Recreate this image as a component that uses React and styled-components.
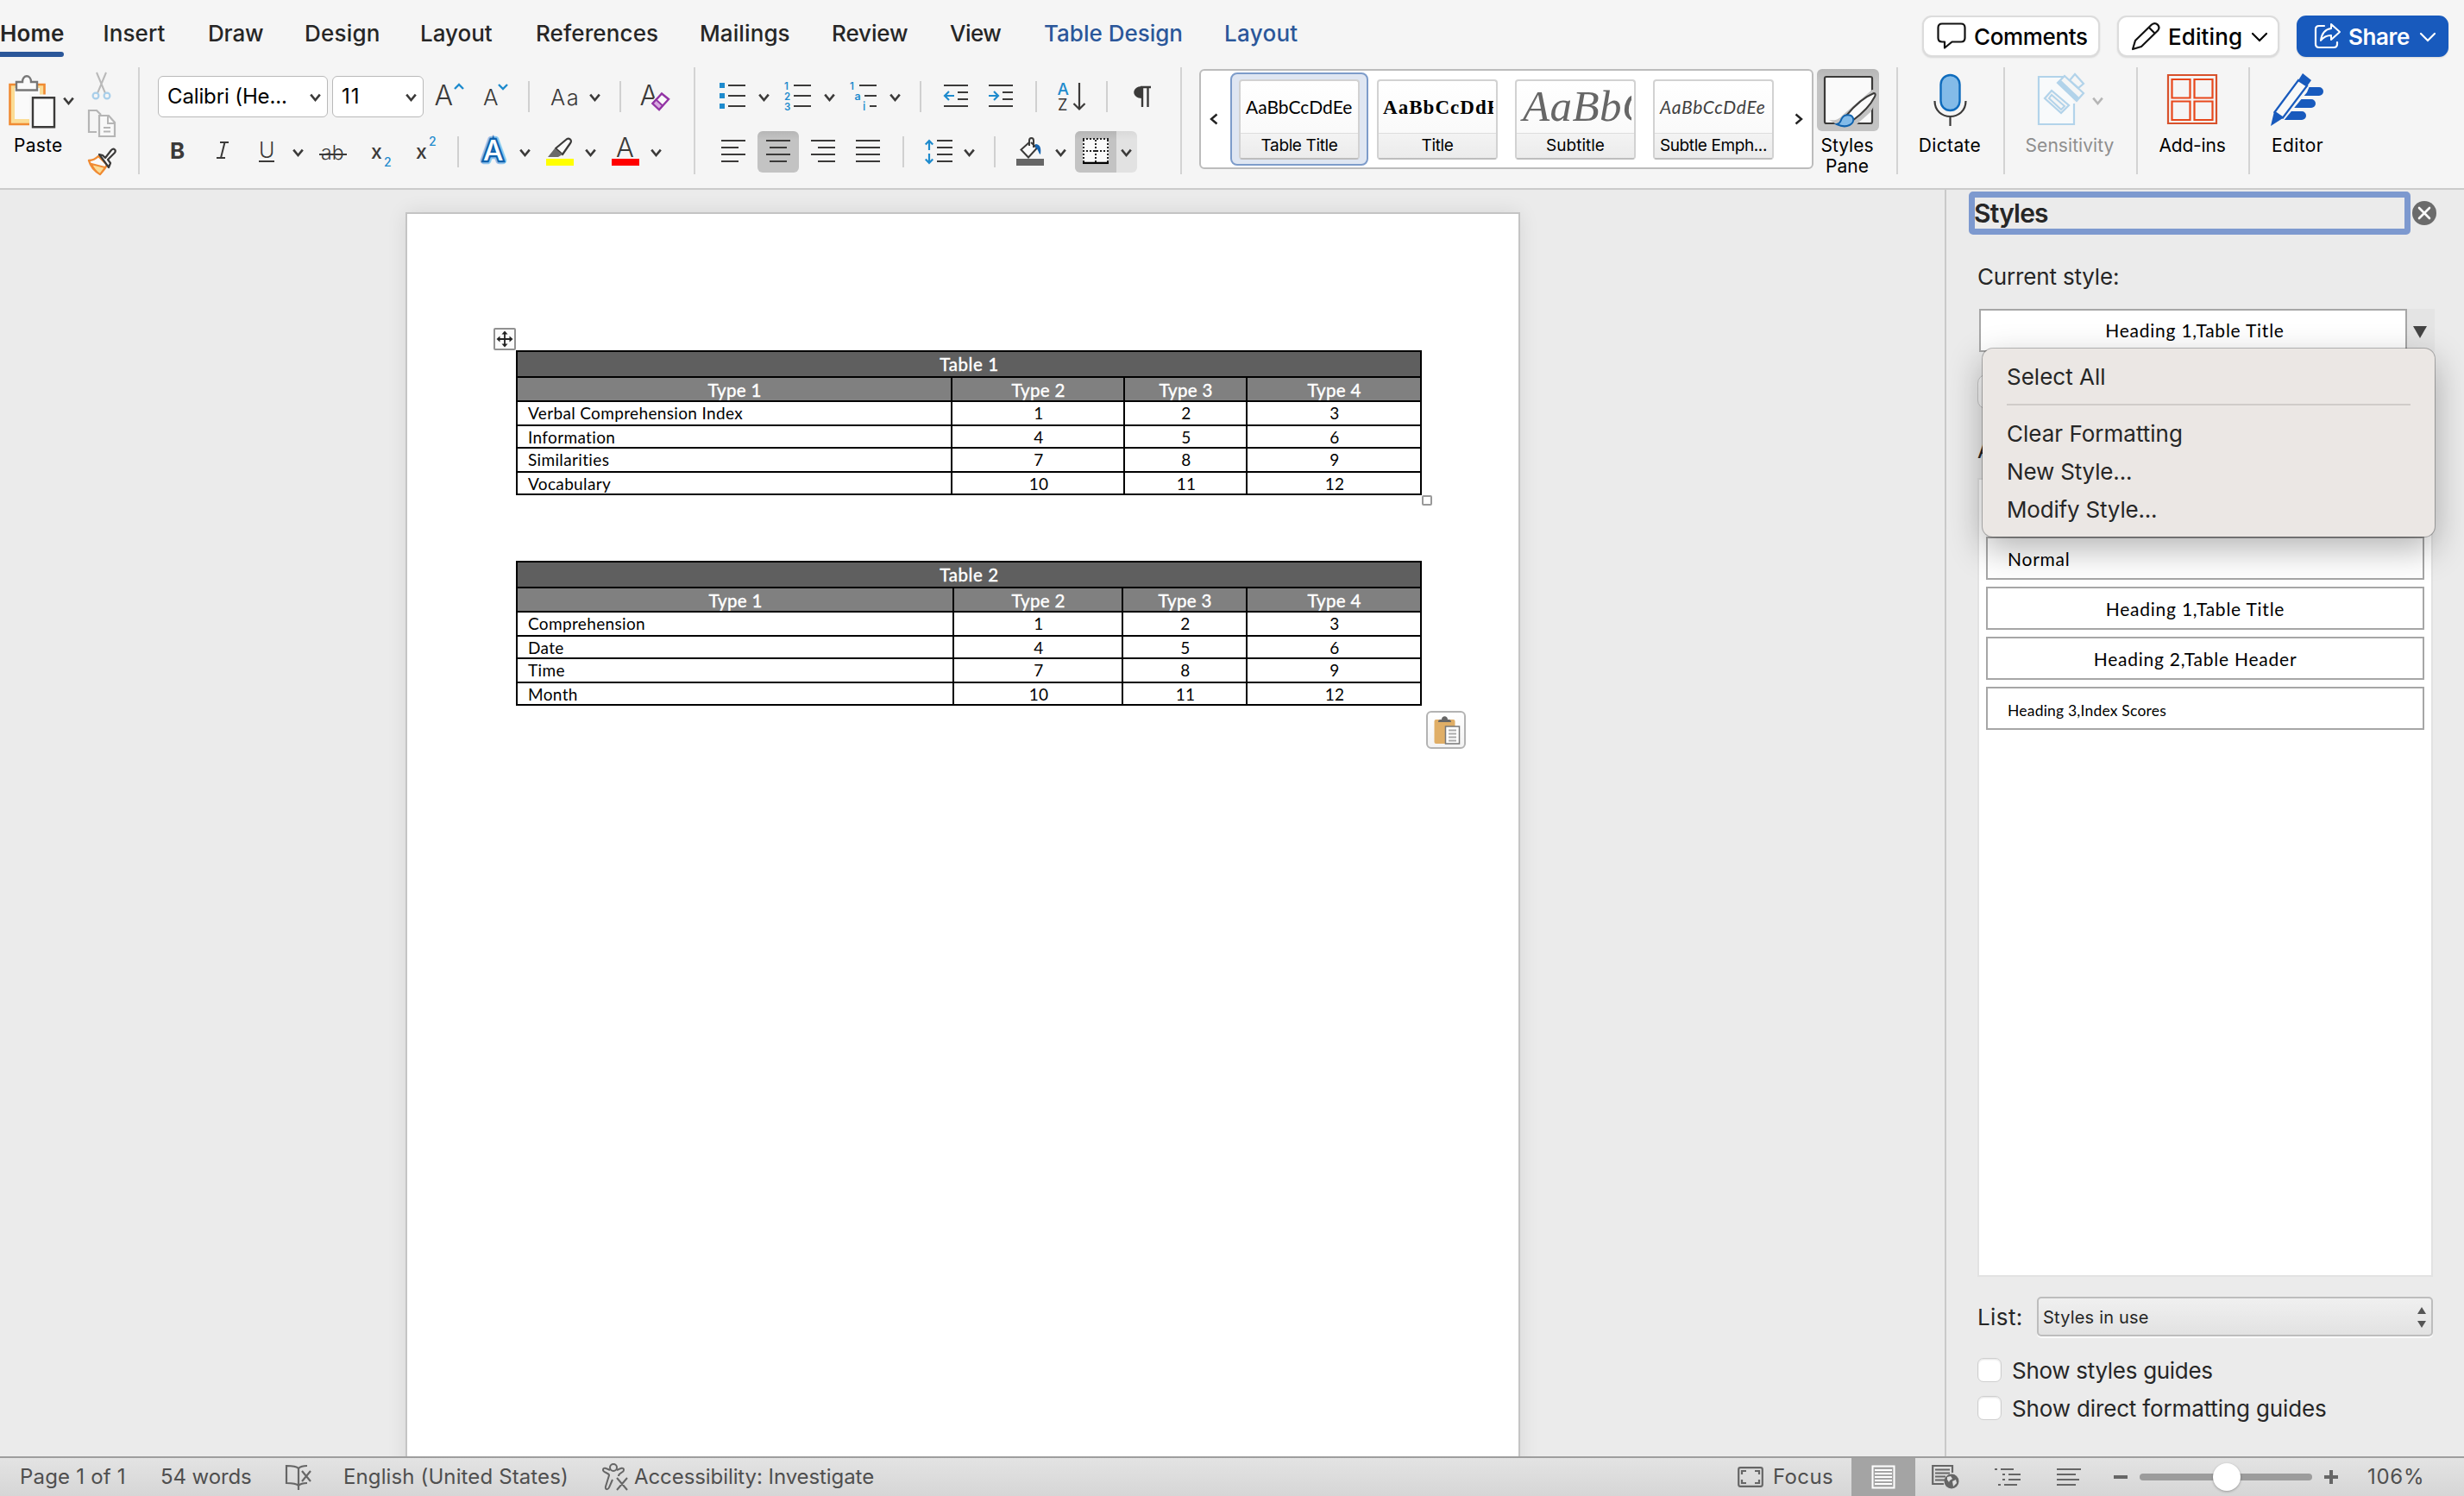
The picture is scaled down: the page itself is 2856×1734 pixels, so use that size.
import React from 'react';
import styled, { createGlobalStyle, css } from 'styled-components';

const ink = '#3b3a39';
const blue = '#1e8bcd';
const gray = '#666';
const ui = '"Inter", "Liberation Sans", sans-serif';
const calibri = '"Lato", "Open Sans", sans-serif';

const GlobalStyle = createGlobalStyle`
  * {
    box-sizing: border-box;
  }
  body {
    margin: 0;
    background: #ebebeb;
    font-family: ${ui};
    color: #262626;
    overflow: hidden;
  }
  svg {
    display: block;
    flex: none;
    overflow: visible;
  }
`;

const Window = styled.div`
  width: 2856px;
  height: 1734px;
  display: flex;
  flex-direction: column;
  overflow: hidden;
`;

/* ---------- tab bar ---------- */

const TabBar = styled.header`
  height: 72px;
  flex: none;
  display: flex;
  justify-content: space-between;
  background: #f5f5f5;
`;

const Tabs = styled.nav`
  display: flex;
  padding-top: 18px;
`;

const Tab = styled.a`
  width: ${props => props.$width}px;
  font-size: 26px;
  line-height: 42px;
  font-weight: ${props => props.$active ? 600 : 500};
  color: ${props => props.$contextual ? '#2b579a' : '#262626'};
  letter-spacing: ${props => props.$spacing || 0}px;
  white-space: nowrap;

  &::after {
    content: '';
    display: ${props => props.$active ? 'block' : 'none'};
    width: 74px;
    height: 6px;
    border-radius: 0 3px 3px 0;
    background: #2b579a;
  }
`;

const TopActions = styled.div`
  display: flex;
  gap: 20px;
  padding: 18px 18px 0 0;
`;

const ActionButton = styled.button`
  height: 48px;
  width: ${props => props.$width}px;
  padding: 0 0 0 ${props => props.$pad}px;
  display: flex;
  align-items: center;
  border: 2px solid ${props => props.$primary ? '#185abd' : '#dcdcdc'};
  border-radius: 11px;
  background: ${props => props.$primary ? '#185abd' : '#fff'};
  color: ${props => props.$primary ? '#fff' : '#000'};
  box-shadow: 0 1px 2px rgba(0, 0, 0, 0.12);
  font-family: ${ui};
  font-size: 26px;
  line-height: 44px;
  font-weight: ${props => props.$primary ? 600 : 500};
  letter-spacing: ${props => props.$spacing}px;
`;

const ActionText = styled.span`
  width: ${props => props.$width}px;
  margin-left: ${props => props.$gap}px;
  padding-top: 1px;
  text-align: left;
`;

/* ---------- ribbon ---------- */

const Ribbon = styled.section`
  height: 148px;
  flex: none;
  display: flex;
  background: #f5f5f5;
  border-bottom: 2px solid #cbcbcb;
`;

const GroupLine = styled.div`
  width: 2px;
  height: 124px;
  flex: none;
  margin-top: 6px;
  background: #d3d3d3;
`;

const Group = styled.div`
  width: ${props => props.$width}px;
  flex: none;
  padding-top: 8px;
`;

const Clipboard = styled(Group)`
  display: flex;
`;

const ToolRow = styled.div`
  height: 64px;
  display: flex;
  align-items: center;
`;

const Svg = styled.svg`
  margin-left: ${props => props.$ml || 0}px;
  margin-top: ${props => props.$mt || 0}px;
`;

const RowLine = styled.div`
  width: 2px;
  height: 36px;
  margin-left: ${props => props.$ml}px;
  background: #d0d0d0;
`;

const Combo = styled.div`
  width: ${props => props.$width}px;
  height: 48px;
  margin-left: ${props => props.$ml}px;
  padding: 0 7px 0 10px;
  display: flex;
  align-items: center;
  justify-content: space-between;
  background: #fff;
  border: 1.5px solid #b9b9b9;
  border-radius: 6px;
  color: #000;
  font-size: 24px;
  line-height: 44px;
  letter-spacing: ${props => props.$spacing}px;
`;

const PasteColumn = styled.div`
  width: 92px;
  padding-left: 10px;
`;

const PasteTop = styled.div`
  height: 72px;
  margin-bottom: 5px;
  display: flex;
  align-items: center;
`;

const SmallColumn = styled.div`
  display: flex;
  flex-direction: column;
  gap: 10px;
  padding: 3px 0 0 8px;
`;

const Caption = styled.div`
  font-size: 21px;
  line-height: 24px;
  letter-spacing: ${props => props.$spacing || 0}px;
  text-align: ${props => props.$left ? 'left' : 'center'};
  padding-left: ${props => props.$left || 0}px;
  color: ${props => props.$muted ? '#8e8e8e' : '#000'};
`;

const pressed = css`
  background: linear-gradient(#b6b6b6, #c3c3c3 20%, #c3c3c3);
`;

const PressedButton = styled.div`
  width: 48px;
  height: 48px;
  margin-left: 14px;
  display: flex;
  align-items: center;
  justify-content: center;
  border-radius: 6px;
  ${pressed}
`;

const SplitButton = styled.div`
  width: 72px;
  height: 48px;
  margin-left: 10px;
  display: flex;
  align-items: center;
  border-radius: 6px;
  background: linear-gradient(#d9d9d9, #e2e2e2 20%);
  overflow: hidden;
`;

const SplitMain = styled.div`
  width: 48px;
  height: 48px;
  display: flex;
  align-items: center;
  justify-content: center;
  ${pressed}
`;

/* ---------- style gallery ---------- */

const Gallery = styled.div`
  width: 712px;
  height: 116px;
  flex: none;
  margin: 8px 0 0 20px;
  padding: 2px 11px 0 10px;
  display: flex;
  background: #fff;
  border: 2px solid #bcbcbc;
  border-radius: 6px;
`;

const GalleryItems = styled.div`
  display: flex;
  flex: 1;
  margin-left: 15px;
`;

const GallerySlot = styled.div`
  width: 160px;
  height: 108px;
  padding: 6px 8px;
  border: 2px solid ${props => props.$selected ? '#7d9cca' : 'transparent'};
  border-radius: 8px;
  background: ${props => props.$selected ? '#dfe6f2' : 'transparent'};
`;

const GalleryCard = styled.div`
  width: 140px;
  height: 93px;
  border: 2px solid #d2d2d2;
  border-bottom-color: #bdbdbd;
  border-radius: 4px;
  background: linear-gradient(#fff, #f7f7f7);
  overflow: hidden;
`;

const GallerySample = styled.div`
  height: 60px;
  margin: 0 3px 0 4px;
  padding-left: ${props => props.$pad || 0}px;
  overflow: hidden;
  white-space: nowrap;
  color: ${props => props.$color};
  font: ${props => props.$font};
  line-height: ${props => props.$line}px;
  letter-spacing: ${props => props.$spacing}px;
`;

const GalleryName = styled.div`
  height: 31px;
  border-top: 1px solid #dedede;
  background: linear-gradient(#f3f3f3, #ebebeb);
  color: #000;
  font-size: 19px;
  line-height: 27px;
  text-align: center;
  white-space: nowrap;
  letter-spacing: ${props => props.$spacing}px;
`;

const GalleryArrow = styled.div`
  width: 9px;
  padding-top: 47px;
`;

const BigTool = styled.div`
  width: ${props => props.$width}px;
  flex: none;
  padding: 8px 2px 0 0;
`;

const StylesPaneTool = styled.div`
  width: 72px;
  flex: none;
  margin: 0 20px 0 4px;
  padding-top: 8px;
`;

const PaneCaption = styled(Caption)`
  padding-right: 2px;
`;

const BigIcon = styled.div`
  height: 72px;
  margin-bottom: 5px;
  display: flex;
  align-items: center;
  justify-content: center;
  border-radius: 6px;
  ${props => props.$pressed && pressed}
`;

/* ---------- document ---------- */

const Workspace = styled.main`
  height: 1468px;
  flex: none;
  display: flex;
`;

const Canvas = styled.div`
  width: 2254px;
  padding: 26px 0 0 470px;
  overflow: hidden;
`;

const Page = styled.article`
  width: 1292px;
  height: 1500px;
  padding: 158px 0 0 126px;
  border: 2px solid #c4c4c4;
  background: #fff;
  box-shadow: 0 0 22px rgba(0, 0, 0, 0.09);
`;

const TableWrap = styled.div`
  position: relative;
  width: 1050px;
  margin-bottom: 76px;
`;

const Grid = styled.div`
  display: grid;
  grid-template-columns: ${props => props.$columns};
  grid-template-rows: 28px 26px 26px 24px 26px 24px;
  gap: 2px;
  padding: 2px;
  background: #000;
  font-family: ${calibri};
`;

const HeadCell = styled.div`
  padding-left: 1px;
  background: #808080;
  color: #fff;
  text-align: center;
  font-size: 20.5px;
  line-height: 28px;
  letter-spacing: 0.3px;
  -webkit-text-stroke: 0.4px #fff;
  overflow: hidden;
`;

const TitleCell = styled(HeadCell)`
  grid-column: 1 / -1;
  background: #5f5f5f;
  letter-spacing: 0.6px;
`;

const Cell = styled.div`
  padding-left: ${props => props.$label ? 12 : 2}px;
  background: #fff;
  color: #000;
  text-align: ${props => props.$label ? 'left' : 'center'};
  font-size: 19px;
  line-height: 25px;
  letter-spacing: 0.35px;
  overflow: hidden;
`;

const MoveHandle = styled.div`
  position: absolute;
  left: -26px;
  top: -26px;
  width: 26px;
  height: 26px;
  border: 2px solid #919191;
  border-radius: 2px;
  background: #fbfbfb;
`;

const ResizeHandle = styled.div`
  position: absolute;
  right: -12px;
  bottom: -12px;
  width: 12px;
  height: 12px;
  border: 2px solid #999;
  border-radius: 2px;
  background: #fff;
`;

const PasteOptions = styled.div`
  position: absolute;
  right: -51px;
  bottom: -50px;
  width: 46px;
  height: 44px;
  border: 2px solid #b3b3b3;
  border-radius: 6px;
  background: linear-gradient(#fff, #f3f3f3);
`;

/* ---------- styles pane ---------- */

const Pane = styled.aside`
  width: 602px;
  padding: 2px 30px 0 26px;
  border-left: 2px solid #c9c9c9;
  background: #ebebeb;
`;

const PaneHeader = styled.div`
  display: flex;
  align-items: center;
  gap: 2px;
`;

const PaneTitle = styled.h2`
  width: 512px;
  height: 50px;
  flex: none;
  margin: 0;
  border: 7px solid #7d99cf;
  border-radius: 5px;
  font-size: 30px;
  line-height: 36px;
  font-weight: 600;
  letter-spacing: -0.8px;
  text-indent: -1px;
`;

const PaneBody = styled.div`
  padding-left: 10px;
`;

const PaneLabel = styled.div`
  font-size: 26px;
  line-height: 32px;
  letter-spacing: ${props => props.$spacing || 0}px;
  color: #262626;
  white-space: nowrap;
`;

const CurrentLabel = styled(PaneLabel)`
  margin: 33px 0 21px;
`;

const CurrentStyle = styled.div`
  position: relative;
  width: 528px;
  height: 50px;
  margin-left: 2px;
  display: flex;
`;

const StyleBox = styled.div`
  width: 508px;
  height: 50px;
  padding: 0 ${props => props.$center ? 46 : 0}px 0 23px;
  border: 2px solid #a6a6a6;
  background: #fff;
  color: #000;
  font-family: ${calibri};
  font-size: ${props => props.$small ? 17.5 : 21}px;
  line-height: ${props => props.$small ? 51 : 48}px;
  letter-spacing: ${props => props.$small ? 0.2 : 0.76}px;
  text-align: ${props => props.$center ? 'center' : 'left'};
`;

const CurrentBox = styled(StyleBox)`
  width: 496px;
  padding: 0 3px 0 7px;
  line-height: 46px;
`;

const DropArrow = styled.div`
  width: 32px;
  padding: 20px 0 0 7px;
  background: #e4e4e4;
`;

const Menu = styled.div`
  position: absolute;
  z-index: 2;
  left: 4px;
  top: 46px;
  width: 524px;
  height: 218px;
  padding: 10px 28px 0;
  border-radius: 12px;
  background: #ebe7e4;
  box-shadow: 0 0 0 1px rgba(0, 0, 0, 0.26), 0 14px 40px rgba(0, 0, 0, 0.3);
`;

const MenuItem = styled.div`
  height: 44px;
  font-size: 26px;
  line-height: 46px;
  letter-spacing: ${props => props.$spacing || 0}px;
  color: #262626;
`;

const MenuRule = styled.div`
  height: 2px;
  margin: 10px 0;
  background: #d0ccc9;
`;

const NewStyleButton = styled.div`
  width: 200px;
  height: 40px;
  margin: 26px 0 32px;
  border: 1px solid #c6c6c6;
  border-radius: 10px;
  background: #f6f6f6;
`;

const StyleList = styled.div`
  width: 528px;
  height: 926px;
  margin: 16px 0 23px;
  padding: 8px;
  display: flex;
  flex-direction: column;
  gap: 8px;
  border: 2px solid #e2e2e2;
  background: #fff;
`;

const ListRow = styled.div`
  display: flex;
  align-items: center;
  margin-bottom: 25px;
`;

const ListLabel = styled(PaneLabel)`
  width: 69px;
  padding-top: 2px;
  letter-spacing: 0.4px;
`;

const ListSelect = styled.div`
  width: 459px;
  height: 46px;
  padding: 2px 6px 0 5px;
  display: flex;
  align-items: center;
  justify-content: space-between;
  border: 2px solid #bdbdbd;
  border-radius: 5px;
  background: linear-gradient(#f0f0f0, #e2e2e2);
  box-shadow: 0 2px 0 #fafafa;
  font-size: 20px;
  letter-spacing: 0.2px;
`;

const CheckRow = styled.label`
  height: 28px;
  margin-bottom: 16px;
  display: flex;
  align-items: center;
  gap: 12px;
`;

const CheckText = styled(PaneLabel)`
  padding-top: 2px;
`;

const CheckBox = styled.span`
  width: 28px;
  height: 28px;
  border: 1.5px solid #cfcfcf;
  border-radius: 7px;
  background: #fff;
  box-shadow: inset 0 1px 2px rgba(0, 0, 0, 0.12);
`;

/* ---------- status bar ---------- */

const StatusBar = styled.footer`
  height: 46px;
  flex: none;
  display: flex;
  align-items: center;
  border-top: 2px solid #9e9e9e;
  background: linear-gradient(#e3e3e3, #d6d6d6);
`;

const StatusText = styled.span`
  width: ${props => props.$width}px;
  flex: none;
  font-size: 24px;
  line-height: 44px;
  letter-spacing: ${props => props.$spacing || 0}px;
  color: #4f4f4f;
  white-space: nowrap;
  padding-left: ${props => props.$pad || 0}px;
`;

const StatusSpacer = styled.div`
  width: 998px;
  flex: none;
`;

const ViewButton = styled.div`
  width: 74px;
  height: 44px;
  flex: none;
  display: flex;
  justify-content: center;
  align-items: center;
  background: #a4a4a4;
`;

const Slider = styled.div`
  width: 200px;
  height: 8px;
  flex: none;
  margin-left: 14px;
  display: flex;
  align-items: center;
  justify-content: center;
  padding-left: 2px;
  border-radius: 4px;
  background: #9c9c9c;
`;

const Knob = styled.div`
  width: 32px;
  height: 32px;
  flex: none;
  border-radius: 50%;
  background: #fff;
  box-shadow: 0 1px 3px rgba(0, 0, 0, 0.3);
`;

/* ---------- icons ---------- */

const Glyph = ({ w, h = 40, ml, mt, children }) => (
  <Svg width={w} height={h} viewBox={`0 0 ${w} ${h}`} fill="none" $ml={ml} $mt={mt}>{children}</Svg>
);

const Chevron = ({ ml, color = ink }) => (
  <Glyph w={13} h={10} ml={ml} mt={2}><path d="M1.2 1.6 6.5 8 11.8 1.6" stroke={color} strokeWidth="2.6"/></Glyph>
);

const SlimChevron = ({ ml }) => (
  <Glyph w={20} h={12} ml={ml} mt={2}><path d="M2 2 10 10 18 2" stroke="currentColor" strokeWidth="2.2" strokeLinecap="round"/></Glyph>
);

const Letters = ({ x, y, size, weight = 300, fill = ink, children, ...rest }) => (
  <text x={x} y={y} fontSize={size} fontWeight={weight} fill={fill} fontFamily="Inter, sans-serif" {...rest}>{children}</text>
);

const PasteIcon = () => (
  <Glyph w={56} h={62} mt={4}>
    <path d="M1.5 11h40v46h-40z" fill="#fbdc95" stroke="#f08b33" strokeWidth="2.6"/>
    <path d="M7 15h29v36H7z" fill="#fafafa"/>
    <path d="M9 8h7c0-9 10-9 10 0h7v9.500H9z" fill="#fafafa" stroke="#777" strokeWidth="2.4"/>
    <path d="M24 22.500h32v39H24z" fill="#f5f5f5"/>
    <path d="M28 26.200h25v34H28z" fill="#fafafa" stroke={ink} strokeWidth="2.4"/>
  </Glyph>
);

const CutIcon = () => (
  <Glyph w={34} h={33}>
    <path d="M12 1 22 25M23 1 13 25" stroke="#b9b9b9" strokeWidth="2"/>
    <circle cx="11" cy="28" r="3.4" stroke="#a9cfea" strokeWidth="2.2"/>
    <circle cx="24" cy="28" r="3.4" stroke="#a9cfea" strokeWidth="2.2"/>
  </Glyph>
);

const CopyIcon = () => (
  <Glyph w={34} h={34}>
    <path d="M12 27H3V2h9l5 5" stroke="#b5b5b5" strokeWidth="2.2"/>
    <path d="M15 8h11l7 8v16H15z" fill="#f8f8f8" stroke="#b5b5b5" strokeWidth="2.2"/>
    <path d="M25 8v9h8M20 22h8M20 26.500h8" stroke="#b5b5b5" strokeWidth="2"/>
  </Glyph>
);

const BrushIcon = () => (
  <Glyph w={34} h={34}>
    <path d="M3 16c5 0 8-2 11-5l10 10c-2 4-4 7-8 11C9 28 5 23 3 16z" fill="#fafafa" stroke="#f08b33" strokeWidth="2.4" strokeLinejoin="round"/>
    <path d="M6 20l16 4-6 8c-5-3-8-7-10-12z" fill="#fbdc95" stroke="#f08b33" strokeWidth="2"/>
    <path d="M15 9l4 1 3 3 7-9c3-3 6 0 4 3l-8 8 3 4-2 5z" fill="#f8f8f8" stroke={ink} strokeWidth="2.2" strokeLinejoin="round"/>
  </Glyph>
);

const GrowFont = () => (
  <Glyph w={34} ml={12}>
    <Letters x={0.5} y={30} size={32}>A</Letters>
    <path d="M24 11l5-5 5 5" stroke={blue} strokeWidth="2.4"/>
  </Glyph>
);

const ShrinkFont = () => (
  <Glyph w={32} ml={22}>
    <Letters x={1} y={30} size={26}>A</Letters>
    <path d="M19 6l5 5 5-5" stroke={blue} strokeWidth="2.4"/>
  </Glyph>
);

const ClearFormat = () => (
  <Glyph w={38} ml={21}>
    <Letters x={0.5} y={30} size={32}>A</Letters>
    <path d="M26 16l9 8-10 11-9-8z" fill="#f5f5f5" stroke="#f5f5f5" strokeWidth="5"/>
    <path d="M26 16.500l8 6.500-11 12-7.500-7z" fill="#fafafa" stroke="#9334a5" strokeWidth="2.4"/>
    <path d="M19.500 23.500l7.500 7-4 4.500-7.500-7z" fill="#d8a9e0" stroke="#9334a5" strokeWidth="2"/>
  </Glyph>
);

const Script = ({ up, ml }) => (
  <Glyph w={28} ml={ml}>
    <Letters x={0} y={28} size={23} weight={500}>x</Letters>
    <Letters x={15} y={up ? 13 : 37} size={14} weight={500} fill={blue}>2</Letters>
  </Glyph>
);

const TextEffects = () => (
  <Glyph w={36} ml={22}>
    <Letters x={6} y={30} size={33} weight={500} stroke="#8fc3ec" strokeWidth="8.5" strokeLinejoin="round">A</Letters>
    <Letters x={6} y={30} size={33} weight={500} stroke="#0f62ad" strokeWidth="4.6">A</Letters>
    <Letters x={6} y={30} size={33} weight={500} fill="#fff">A</Letters>
  </Glyph>
);

const Highlighter = () => (
  <Glyph w={32} ml={18}>
    <path d="M0 28h32v8H0z" fill="#ff0"/>
    <path d="M11 16 23 6c3-3 8 0 5 4l-9 13z" fill="#fafafa" stroke={ink} strokeWidth="2.2" strokeLinejoin="round"/>
    <path d="M10 16l9 7-5 3H2z" fill="#6a6a6a"/>
  </Glyph>
);

const FontColor = () => (
  <Glyph w={32} ml={18}>
    <Letters x={5} y={26} size={31}>A</Letters>
    <path d="M0 28h32v8H0z" fill="red"/>
  </Glyph>
);

const Bullets = () => (
  <Glyph w={30} ml={28}>
    <path d="M0 4h6v6H0zM0 16h6v6H0zM0 28h6v6H0z" fill={blue}/>
    <path d="M10 7h20M10 19h20M10 31h20" stroke={ink} strokeWidth="2"/>
  </Glyph>
);

const Numbering = () => (
  <Glyph w={32} ml={16}>
    <Letters x={1} y={12} size={11.5} weight={600} fill={blue}>1</Letters>
    <Letters x={1} y={24} size={11.5} weight={600} fill={blue}>2</Letters>
    <Letters x={1} y={36} size={11.5} weight={600} fill={blue}>3</Letters>
    <path d="M12 7h20M12 19h20M12 31h20" stroke={ink} strokeWidth="2"/>
  </Glyph>
);

const Multilevel = () => (
  <Glyph w={32} ml={16}>
    <Letters x={1} y={12} size={11.5} weight={600} fill={blue}>1</Letters>
    <Letters x={6.5} y={24} size={12.5} weight={600} fill={blue}>a</Letters>
    <Letters x={16} y={36} size={13} weight={500} fill={blue}>i</Letters>
    <path d="M12 7h20M18 19h14M24 31h8" stroke={ink} strokeWidth="2"/>
  </Glyph>
);

const Indent = ({ out, ml }) => (
  <Glyph w={28} ml={ml}>
    <path d="M0 7h28M16 15h12M16 23h12M0 31h28" stroke={ink} strokeWidth="2"/>
    <path d={out ? 'M12 19H1.500M6 14l-5 5 5 5' : 'M0 19h10.500M6 14l5 5-5 5'} stroke={blue} strokeWidth="2.2"/>
  </Glyph>
);

const SortIcon = () => (
  <Glyph w={34} ml={24}>
    <Letters x={-0.5} y={18} size={19} weight={500} fill={blue}>A</Letters>
    <Letters x={0} y={36} size={18} weight={400}>Z</Letters>
    <path d="M25 4v30M18.500 28l6.500 6.500 6.500-6.500" stroke={ink} strokeWidth="2.2"/>
  </Glyph>
);

const Pilcrow = () => (
  <Glyph w={24} ml={28}>
    <path d="M22 9H10M12 9v23M18.500 9v23" stroke={ink} strokeWidth="2.4"/>
    <path d="M12 8c-13 0-13 14 0 14z" fill={ink}/>
  </Glyph>
);

const alignShapes = {
  left: 'M0 7h28M0 15h20M0 23h28M0 31h20',
  center: 'M0 7h28M4 15h20M0 23h28M4 31h20',
  right: 'M0 7h28M8 15h20M0 23h28M8 31h20',
  justify: 'M0 7h28M0 15h28M0 23h28M0 31h28',
};

const Align = ({ kind, ml }) => (
  <Glyph w={28} ml={ml}><path d={alignShapes[kind]} stroke={ink} strokeWidth="2"/></Glyph>
);

const LineSpacing = () => (
  <Glyph w={32} ml={24}>
    <path d="M14 7h18M14 15h18M14 23h18M14 31h18" stroke={ink} strokeWidth="2"/>
    <path d="M5 7v11M.8 11.500 5 7l4.200 4.500M5 22v11M.8 28.500 5 33l4.200-4.500" stroke={blue} strokeWidth="2.2"/>
  </Glyph>
);

const Shading = () => (
  <Glyph w={34} ml={24}>
    <path d="M0 28h32v8H0z" fill="#666"/>
    <path d="M15 9 5.500 17.500 14 26.500l10-11L17 9" fill="#fafafa" stroke={ink} strokeWidth="2"/>
    <path d="M15 13V7c0-4 5-4 5 0v8" stroke={ink} strokeWidth="2"/>
    <path d="M22 11c6 0 7 5 6 12-3-2-2-6-6-8z" fill="#1664b0"/>
  </Glyph>
);

const BorderIcon = () => (
  <Glyph w={30}>
    <path d="M0 5h30v30H0z" fill="#fafafa"/>
    <path d="M0 5h30M0 19h30" stroke="#222" strokeWidth="2" strokeDasharray="2 2"/>
    <path d="M1 6v26M15 6v26M29 6v26" stroke="#222" strokeWidth="2" strokeDasharray="2 2"/>
    <path d="M0 33h30" stroke="#000" strokeWidth="2.4"/>
  </Glyph>
);

const StylesPaneIcon = () => (
  <Glyph w={64} h={64}>
    <rect x="5" y="5" width="55" height="54" rx="2" fill="#fafafa" stroke={ink} strokeWidth="2.2"/>
    <path d="M10 55c8 1 12-1 15-5L60 20h6v12L58 46 40 62H22z" fill="#c3c3c3"/>
    <path d="M30 50C40 38 52 28 62 24c2 0 2 2 1 4C58 38 48 48 37 56z" fill="#fafafa" stroke={ink} strokeWidth="2"/>
    <path d="M19 60c5-1 4-4 6-7 3-5 11-5 13 0 2 6-7 13-19 7z" fill="#83bbe8" stroke="#0f62ad" strokeWidth="2"/>
  </Glyph>
);

const DictateIcon = () => (
  <Glyph w={40} h={64}>
    <rect x="9.5" y="3" width="22" height="41" rx="11" fill="#83bbe8" stroke="#0f6cbd" strokeWidth="2.4"/>
    <path d="M2.500 33c0 24 36 24 36 0M20.500 51v11" stroke={ink} strokeWidth="2.2"/>
  </Glyph>
);

const SensitivityIcon = () => (
  <Glyph w={56} h={64}>
    <path d="M33 5H2v55h41V36" stroke="#b2d3ea" strokeWidth="2.2" fill="#f8fafb"/>
    <path d="M9 30l8-9 20 17-9 9z" fill="#f5f5f5" stroke="#b2d3ea" strokeWidth="2.2"/>
    <path d="M14 30l3-4 15 13-4 4z" stroke="#b2d3ea" strokeWidth="2"/>
    <path d="M24 12l8-8 22 20-8 9z" fill="#f5f5f5" stroke="#b2d3ea" strokeWidth="2.2"/>
    <path d="M24 12l22 21 3-4-21-20z" fill="#b2d3ea"/>
    <path d="M38 9l6-7 10 11-6 5z" fill="#f5f5f5" stroke="#b2d3ea" strokeWidth="2.2"/>
  </Glyph>
);

const AddinsIcon = () => (
  <Glyph w={60} h={64}>
    <path d="M2 3h56v56H2z" stroke="#d8512b" strokeWidth="2.2"/>
    <path d="M6.500 8h21v21.500h-21zM32.500 8h21v21.500h-21zM6.500 33.500h21V55h-21zM32.500 33.500h21V55h-21z" stroke="#e8481c" strokeWidth="2.2"/>
  </Glyph>
);

const EditorIcon = () => (
  <Glyph w={64} h={64}>
    <path d="M30 17h27a5 5 0 0 1 0 10H30zM24 31h24a5 5 0 0 1 0 10H20zM16 45h21a5 5 0 0 1 0 10H10z" fill="#185abd"/>
    <path d="M4 44 36 4l12 7-5 12-28 34-11 6z" fill="#f5f5f5"/>
    <path d="M5.500 46 33 9l10 6.500-28 37z" fill="#f8f8f8" stroke="#185abd" strokeWidth="2.2"/>
    <path d="M38 1l10 8-5 7-10-7zM5 45l10 8-14 9z" fill="#185abd"/>
  </Glyph>
);

const CommentIcon = () => (
  <Glyph w={36} h={34}>
    <path d="M7 2.500h22c3 0 4.500 1.500 4.500 4.500v12c0 3-1.500 4.500-4.500 4.500H18.500L10 30.500v-7H7c-3 0-4.500-1.500-4.500-4.500V7c0-3 1.500-4.500 4.500-4.500z" stroke="#111" strokeWidth="2.2" strokeLinejoin="round"/>
  </Glyph>
);

const PencilIcon = () => (
  <Glyph w={36} h={34}>
    <path d="M2 32l3-10L24 3.500c5-4 11 2 7 7L12 29zM21 7l7 7" stroke="#111" strokeWidth="2.2" strokeLinejoin="round"/>
  </Glyph>
);

const ShareIcon = () => (
  <Glyph w={34} h={32}>
    <path d="M13 4H7C4 4 3 5.500 3 8v17c0 3 1.500 4 4 4h17c3 0 4-1.500 4-4v-2" stroke="#fff" strokeWidth="2.2" strokeLinecap="round"/>
    <path d="M21 2l10 9-10 9v-5c-5 0-9 2-12 6 1-8 5-13 12-14z" stroke="#fff" strokeWidth="2" strokeLinejoin="round"/>
  </Glyph>
);

/* ---------- data ---------- */

const tabs = [
  { name: 'Home', width: 119.5, spacing: 0.1, active: true },
  { name: 'Insert', width: 121.5, spacing: 0.1 },
  { name: 'Draw', width: 112, spacing: -0.15 },
  { name: 'Design', width: 134, spacing: 0.2 },
  { name: 'Layout', width: 134 },
  { name: 'References', width: 190, spacing: 0.12 },
  { name: 'Mailings', width: 153, spacing: 0.1 },
  { name: 'Review', width: 137, spacing: -0.1 },
  { name: 'View', width: 109, spacing: -0.5 },
  { name: 'Table Design', width: 209, contextual: true },
  { name: 'Layout', width: 100, spacing: 0.3, contextual: true },
];

const gallery = [
  { name: 'Table Title', spacing: -0.38, sample: 'AaBbCcDdEe', font: `21px ${calibri}`, line: 60, gap: 0, pad: 2, color: '#000', selected: true },
  { name: 'Title', spacing: -0.4, sample: 'AaBbCcDdE', font: 'bold 23px "Liberation Serif", serif', line: 61, gap: 1.05, pad: 1, color: '#000' },
  { name: 'Subtitle', spacing: 0, sample: 'AaBbC', font: 'italic 51px "Liberation Serif", serif', line: 58, gap: 0.4, pad: 3, color: '#666' },
  { name: 'Subtle Emph...', spacing: -0.4, sample: 'AaBbCcDdEe', font: `italic 21px ${calibri}`, line: 60, gap: 0.7, pad: 2, color: '#404040' },
];

const bigTools = [
  { width: 122, name: 'Dictate', spacing: 0.35, icon: <DictateIcon/> },
  { width: 152, name: 'Sensitivity', spacing: 0.06, icon: <><SensitivityIcon/><Chevron ml={8} color="#b5b5b5"/></>, muted: true },
  { width: 128, name: 'Add-ins', spacing: -0.2, icon: <AddinsIcon/> },
  { width: 112, name: 'Editor', spacing: 0.4, icon: <EditorIcon/> },
];

const tables = [
  {
    title: 'Table 1',
    columns: '502px 198px 140px 200px',
    rows: [['Verbal Comprehension Index', 1, 2, 3], ['Information', 4, 5, 6], ['Similarities', 7, 8, 9], ['Vocabulary', 10, 11, 12]],
  },
  {
    title: 'Table 2',
    columns: '504px 194px 142px 200px',
    rows: [['Comprehension', 1, 2, 3], ['Date', 4, 5, 6], ['Time', 7, 8, 9], ['Month', 10, 11, 12]],
  },
];

const heads = ['Type 1', 'Type 2', 'Type 3', 'Type 4'];

/* ---------- parts ---------- */

const Header = () => (
  <TabBar>
    <Tabs>
      {tabs.map((tab, i) => (
        <Tab key={i} $width={tab.width} $spacing={tab.spacing} $active={tab.active} $contextual={tab.contextual}>{tab.name}</Tab>
      ))}
    </Tabs>
    <TopActions>
      <ActionButton $width={206} $pad={14} $spacing={-0.35}>
        <CommentIcon/>
        <ActionText $width={140} $gap={8}>Comments</ActionText>
      </ActionButton>
      <ActionButton $width={188} $pad={14} $spacing={0.1}>
        <PencilIcon/>
        <ActionText $width={90} $gap={7}>Editing</ActionText>
        <SlimChevron ml={6}/>
      </ActionButton>
      <ActionButton $width={176} $pad={17} $spacing={-0.4} $primary>
        <ShareIcon/>
        <ActionText $width={76} $gap={7}>Share</ActionText>
        <SlimChevron ml={6}/>
      </ActionButton>
    </TopActions>
  </TabBar>
);

const ClipboardGroup = () => (
  <Clipboard $width={160}>
    <PasteColumn>
      <PasteTop>
        <PasteIcon/>
        <Chevron ml={7}/>
      </PasteTop>
      <Caption $left={6} $spacing={0.25}>Paste</Caption>
    </PasteColumn>
    <SmallColumn>
      <CutIcon/>
      <CopyIcon/>
      <BrushIcon/>
    </SmallColumn>
  </Clipboard>
);

const FontGroup = () => (
  <Group $width={642}>
    <ToolRow>
      <Combo $width={197} $ml={21} $spacing={-0.13}>Calibri (He...<Chevron/></Combo>
      <Combo $width={106} $ml={5} $spacing={1}>11<Chevron/></Combo>
      <GrowFont/>
      <ShrinkFont/>
      <RowLine $ml={21}/>
      <Glyph w={36} ml={24}><Letters x={0} y={30} size={25.5} letterSpacing="1.6">Aa</Letters></Glyph>
      <Chevron ml={9}/>
      <RowLine $ml={22}/>
      <ClearFormat/>
    </ToolRow>
    <ToolRow>
      <Glyph w={20} ml={35}><Letters x={0} y={28} size={26} weight={700}>B</Letters></Glyph>
      <Glyph w={20} ml={31}><path d="M7 9h10M3 27h10M12.500 9 8 27" stroke={ink} strokeWidth="2"/></Glyph>
      <Glyph w={22} ml={30}>
        <Letters x={2} y={27} size={25}>U</Letters>
        <path d="M2 31h18" stroke={ink} strokeWidth="2"/>
      </Glyph>
      <Chevron ml={19}/>
      <Glyph w={36} ml={16}>
        <Letters x={4} y={29} size={23}>ab</Letters>
        <path d="M2 23h32" stroke={ink} strokeWidth="2"/>
      </Glyph>
      <Script ml={26}/>
      <Script ml={24} up/>
      <RowLine $ml={20}/>
      <TextEffects/>
      <Chevron ml={12}/>
      <Highlighter/>
      <Chevron ml={13}/>
      <FontColor/>
      <Chevron ml={13}/>
    </ToolRow>
  </Group>
);

const ParagraphGroup = () => (
  <Group $width={562}>
    <ToolRow>
      <Bullets/>
      <Chevron ml={15}/>
      <Numbering/>
      <Chevron ml={15}/>
      <Multilevel/>
      <Chevron ml={15}/>
      <RowLine $ml={22}/>
      <Indent out ml={26}/>
      <Indent ml={24}/>
      <RowLine $ml={26}/>
      <SortIcon/>
      <RowLine $ml={22}/>
      <Pilcrow/>
    </ToolRow>
    <ToolRow>
      <Align kind="left" ml={30}/>
      <PressedButton><Align kind="center"/></PressedButton>
      <Align kind="right" ml={14}/>
      <Align kind="justify" ml={24}/>
      <RowLine $ml={26}/>
      <LineSpacing/>
      <Chevron ml={13}/>
      <RowLine $ml={22}/>
      <Shading/>
      <Chevron ml={11}/>
      <SplitButton>
        <SplitMain><BorderIcon/></SplitMain>
        <Chevron ml={5}/>
      </SplitButton>
    </ToolRow>
  </Group>
);

const StyleGallery = () => (
  <Gallery>
    <GalleryArrow><Glyph w={10} h={14}><path d="M8.500 1.500 2 7l6.500 5.500" stroke="#222" strokeWidth="2.4"/></Glyph></GalleryArrow>
    <GalleryItems>
      {gallery.map(item => (
        <GallerySlot key={item.name} $selected={item.selected}>
          <GalleryCard>
            <GallerySample $font={item.font} $line={item.line} $spacing={item.gap} $pad={item.pad} $color={item.color}>{item.sample}</GallerySample>
            <GalleryName $spacing={item.spacing}>{item.name}</GalleryName>
          </GalleryCard>
        </GallerySlot>
      ))}
    </GalleryItems>
    <GalleryArrow><Glyph w={10} h={14}><path d="M1.500 1.500 8 7l-6.500 5.500" stroke="#222" strokeWidth="2.4"/></Glyph></GalleryArrow>
  </Gallery>
);

const RibbonBar = () => (
  <Ribbon>
    <ClipboardGroup/>
    <GroupLine/>
    <FontGroup/>
    <GroupLine/>
    <ParagraphGroup/>
    <GroupLine/>
    <StyleGallery/>
    <StylesPaneTool>
      <BigIcon $pressed><StylesPaneIcon/></BigIcon>
      <PaneCaption>Styles</PaneCaption>
      <PaneCaption>Pane</PaneCaption>
    </StylesPaneTool>
    {bigTools.map(tool => (
      <React.Fragment key={tool.name}>
        <GroupLine/>
        <BigTool $width={tool.width}>
          <BigIcon>{tool.icon}</BigIcon>
          <Caption $spacing={tool.spacing} $muted={tool.muted}>{tool.name}</Caption>
        </BigTool>
      </React.Fragment>
    ))}
  </Ribbon>
);

const DataTable = ({ table, children }) => (
  <TableWrap>
    <Grid $columns={table.columns}>
      <TitleCell>{table.title}</TitleCell>
      {heads.map(head => <HeadCell key={head}>{head}</HeadCell>)}
      {table.rows.map(row => row.map((value, i) => <Cell key={value} $label={i === 0}>{value}</Cell>))}
    </Grid>
    {children}
  </TableWrap>
);

const Document = () => (
  <Canvas>
    <Page>
      <DataTable table={tables[0]}>
        <MoveHandle>
          <Glyph w={22} h={22}>
            <path d="M11 3v16M3 11h16" stroke="#222" strokeWidth="1.8"/>
            <path d="M11 1.500l3.500 4h-7zM11 20.500l3.500-4h-7zM1.500 11l4-3.500v7zM20.500 11l-4-3.500v7z" fill="#222"/>
          </Glyph>
        </MoveHandle>
        <ResizeHandle/>
      </DataTable>
      <DataTable table={tables[1]}>
        <PasteOptions>
          <Glyph w={42} h={40}>
            <rect x="7.5" y="8" width="24" height="28" rx="2" fill="#e0ae66"/>
            <path d="M12 11c0-3 2-3 4-3 0-5 7-5 7 0 2 0 4 0 4 3z" fill="#666"/>
            <path d="M20.500 16h16v20h-16z" fill="#fff" stroke="#777" strokeWidth="1.5"/>
            <path d="M24 20.500h9M24 24.500h9M24 28.500h9M24 32.500h9" stroke="#aaa" strokeWidth="1.8"/>
          </Glyph>
        </PasteOptions>
      </DataTable>
    </Page>
  </Canvas>
);

const StylesPane = () => (
  <Pane>
    <PaneHeader>
      <PaneTitle>Styles</PaneTitle>
      <Glyph w={28} h={28}>
        <circle cx="14" cy="14" r="14" fill="#6b6b6b"/>
        <path d="M8 8l12 12M20 8 8 20" stroke="#fff" strokeWidth="2.6" strokeLinecap="round"/>
      </Glyph>
    </PaneHeader>
    <PaneBody>
      <CurrentLabel $spacing={-0.17}>Current style:</CurrentLabel>
      <CurrentStyle>
        <CurrentBox $center>Heading 1,Table Title</CurrentBox>
        <DropArrow><Glyph w={16} h={14}><path d="M0 0h16L8 14z" fill="#444"/></Glyph></DropArrow>
        <Menu>
          <MenuItem>Select All</MenuItem>
          <MenuRule/>
          <MenuItem>Clear Formatting</MenuItem>
          <MenuItem $spacing={-0.16}>New Style...</MenuItem>
          <MenuItem $spacing={-0.19}>Modify Style...</MenuItem>
        </Menu>
      </CurrentStyle>
      <NewStyleButton/>
      <PaneLabel>A</PaneLabel>
      <StyleList>
        <StyleBox/>
        <StyleBox>Normal</StyleBox>
        <StyleBox $center>Heading 1,Table Title</StyleBox>
        <StyleBox $center>Heading 2,Table Header</StyleBox>
        <StyleBox $small>Heading 3,Index Scores</StyleBox>
      </StyleList>
      <ListRow>
        <ListLabel>List:</ListLabel>
        <ListSelect>
          Styles in use
          <Glyph w={10} h={24}><path d="M5 0l5 8H0zM0 16h10l-5 8z" fill="#555"/></Glyph>
        </ListSelect>
      </ListRow>
      <CheckRow><CheckBox/><CheckText $spacing={-0.3}>Show styles guides</CheckText></CheckRow>
      <CheckRow><CheckBox/><CheckText $spacing={-0.15}>Show direct formatting guides</CheckText></CheckRow>
    </PaneBody>
  </Pane>
);

const Status = () => (
  <StatusBar>
    <StatusText $width={186} $pad={23} $spacing={0.2}>Page 1 of 1</StatusText>
    <StatusText $width={144} $spacing={-0.1}>54 words</StatusText>
    <Glyph w={32} h={30}>
      <path d="M16 5c-3-3-9-3-14-3v20c5 0 11 0 14 3zM16 5c3-3 6-3 10-3M16 25c3-3 6-3 10-3M16 23v7M20 8l10 12M30 8 20 20" stroke={gray} strokeWidth="2.2"/>
    </Glyph>
    <StatusText $width={336} $pad={36} $spacing={0.12}>English (United States)</StatusText>
    <Glyph w={32} h={32}>
      <circle cx="13" cy="5" r="4" stroke={gray} strokeWidth="2"/>
      <path d="M9 8C5 6 1 4 1 8c0 3 7 3 7 6l-4 13c-1 4 3 4 4 1l4-9M17 8c4-2 8-4 8 0 0 3-6 3-6 7M17 17l12 14M29 17 17 31" stroke={gray} strokeWidth="2"/>
    </Glyph>
    <StatusText $width={286} $pad={5} $spacing={-0.08}>Accessibility: Investigate</StatusText>
    <StatusSpacer/>
    <Glyph w={30} h={24}>
      <rect x="1.2" y="1.2" width="27.6" height="21.6" rx="2" stroke={gray} strokeWidth="2.2"/>
      <path d="M5 9V5h5M20 5h5v4M25 15v4h-5M10 19H5v-4" stroke={gray} strokeWidth="2.2"/>
    </Glyph>
    <StatusText $width={102} $pad={11} $spacing={0.37}>Focus</StatusText>
    <ViewButton>
      <Glyph w={28} h={28}>
        <path d="M1.500 1.500h25v25h-25z" stroke="#fff" strokeWidth="2"/>
        <path d="M4 6h20M4 10h20M4 14h20M4 18h20M4 22h20" stroke="#fff" strokeWidth="2"/>
      </Glyph>
    </ViewButton>
    <Glyph w={32} h={30} ml={19}>
      <path d="M14 23H1.200V2H24v8" stroke={gray} strokeWidth="2.2"/>
      <path d="M4 6.500h17M4 10.500h17M4 14.500h12M4 18.500h11" stroke={gray} strokeWidth="2"/>
      <circle cx="23" cy="20" r="8.5" fill={gray}/>
      <path d="M18 15l4-1 2 3-3 2-1 2-2-3zM24 20l4-2 1 4-4 4z" fill="#e0e0e0"/>
    </Glyph>
    <Glyph w={30} h={24} ml={41}>
      <path d="M0 3h3M7 3h15M9 9h3M16 9h14M9 15h3M16 15h14M4 21h3M11 21h15" stroke={gray} strokeWidth="2.2"/>
    </Glyph>
    <Glyph w={28} h={24} ml={42}>
      <path d="M0 3h28M0 9h22M0 15h26M0 21h22" stroke={gray} strokeWidth="2.2"/>
    </Glyph>
    <Glyph w={16} h={16} ml={38}><path d="M0 8h16" stroke={gray} strokeWidth="4"/></Glyph>
    <Slider><Knob/></Slider>
    <Glyph w={16} h={16} ml={14}><path d="M0 8h16M8 0v16" stroke={gray} strokeWidth="4"/></Glyph>
    <StatusText $width={100} $pad={34} $spacing={0.7}>106%</StatusText>
  </StatusBar>
);

const App = () => (
  <Window>
    <GlobalStyle/>
    <Header/>
    <RibbonBar/>
    <Workspace>
      <Document/>
      <StylesPane/>
    </Workspace>
    <Status/>
  </Window>
);

export default App;
